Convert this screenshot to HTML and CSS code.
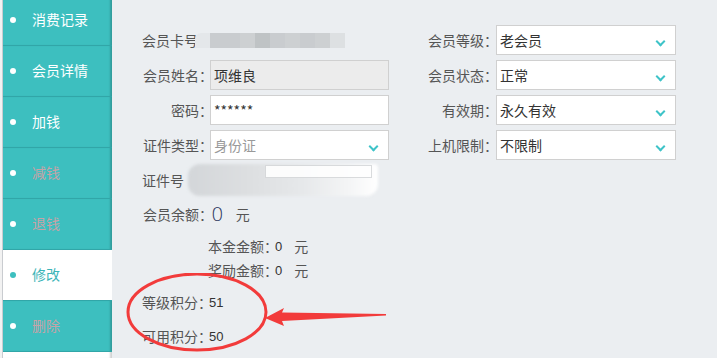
FILE: index.html
```html
<!DOCTYPE html>
<html lang="zh-CN">

<head>
    <meta charset="UTF-8">
    <meta name="viewport" content="width=device-width, initial-scale=1.0">
    <title>会员修改</title>
    <link rel="stylesheet" href="styles.css">
</head>

<body>
    <div class="edge"></div>

    <ul class="sidebar">
        <li class="nav-item">消费记录</li>
        <li class="nav-item">会员详情</li>
        <li class="nav-item">加钱</li>
        <li class="nav-item disabled">减钱</li>
        <li class="nav-item disabled">退钱</li>
        <li class="nav-item active">修改</li>
        <li class="nav-item disabled">删除</li>
    </ul>

    <div class="main">
        <div class="form">
            <div class="label plain">会员卡号</div>
            <div class="cell">
                <div class="mosaic">
                    <span class="m1"></span><span class="m2 wide"></span><span class="m3"></span><span class="m4"></span>
                    <span class="m2"></span><span class="m3"></span><span class="m2"></span><span class="m3"></span><span class="m5"></span>
                </div>
            </div>
            <div class="label right">会员等级：</div>
            <div class="select">老会员<span class="chevron"></span></div>

            <div class="label">会员姓名：</div>
            <div class="input readonly">项维良</div>
            <div class="label right">会员状态：</div>
            <div class="select">正常<span class="chevron"></span></div>

            <div class="label">密码：</div>
            <div class="input">******</div>
            <div class="label right">有效期：</div>
            <div class="select">永久有效<span class="chevron"></span></div>

            <div class="label">证件类型：</div>
            <div class="select placeholder">身份证<span class="chevron"></span></div>
            <div class="label right">上机限制：</div>
            <div class="select">不限制<span class="chevron"></span></div>

            <div class="label plain">证件号</div>
            <div class="cell wide">
                <div class="smear"></div>
                <div class="smear-bar"></div>
            </div>
        </div>

        <div class="balance">
            <div class="label">会员余额：</div>
            <span class="big-num">0</span>
            <span class="unit">元</span>
        </div>

        <div class="sub-row first">
            <span class="sub-label">本金金额：</span><span class="num">0</span><span class="unit">元</span>
        </div>
        <div class="sub-row">
            <span class="sub-label">奖励金额：</span><span class="num">0</span><span class="unit">元</span>
        </div>

        <div class="points first">
            <span class="sub-label">等级积分：</span><span class="num">51</span>
        </div>
        <div class="points">
            <span class="sub-label">可用积分：</span><span class="num">50</span>
        </div>

        <svg class="mark" width="280" height="100" viewBox="0 0 280 100">
            <ellipse cx="85" cy="39" rx="69" ry="38" fill="none" stroke="#f23b3b" stroke-width="3" />
            <polygon points="153,45 172,35 170,39.5 274,41 274,42.5 170,48 172,53" fill="#f23b3b" />
        </svg>
    </div>
</body>

</html>
```

FILE: styles.css
```css
* {
    box-sizing: border-box;
}

body {
    margin: 0;
    height: 358px;
    overflow: hidden;
    display: flex;
    font-family: "Noto Sans CJK SC", "Liberation Sans", sans-serif;
    font-size: 14px;
    font-feature-settings: "halt";
    background-color: #ebeef1;
}

.edge {
    width: 3px;
    background: #f2f2f2;
    border-right: 1px solid #c9ccd0;
}

/* left menu */
.sidebar {
    width: 109px;
    margin: -5px 0 0;
    padding: 0;
    list-style: none;
    background: #fff;
    box-shadow: inset -3px 0 2px -1px rgba(0, 0, 0, 0.18);
}

.nav-item {
    position: relative;
    height: 51px;
    padding: 0 0 2px 29px;
    display: flex;
    align-items: center;
    color: #fff;
    background: #3dbfbf;
    border-bottom: 1px solid #31a6a8;
    box-shadow: inset -3px 0 2px -1px rgba(0, 0, 0, 0.18);
}

.nav-item::before {
    content: "";
    position: absolute;
    left: 7px;
    top: 22px;
    width: 6px;
    height: 6px;
    border-radius: 50%;
    background: #fff;
}

.nav-item.disabled {
    color: #c7a3a7;
}

.nav-item.active {
    color: #3bb5b8;
    background: #fff;
    box-shadow: none;
}

.nav-item.active::before {
    background: #3dbfbf;
}

/* form */
.main {
    position: relative;
    flex: 1;
    padding: 25px 0 0 28px;
    color: #555;
}

.form {
    display: grid;
    grid-template-columns: 70px 179px 107px 180px;
    grid-auto-rows: 30px;
    row-gap: 5px;
}

.label {
    display: flex;
    align-items: center;
    justify-content: flex-end;
    padding-right: 4px;
    white-space: nowrap;
}

.label.plain {
    justify-content: flex-start;
    padding-left: 2px;
}

.label.right {
    padding-right: 5px;
}

.input,
.select {
    position: relative;
    display: flex;
    align-items: center;
    padding-left: 3px;
    color: #333;
    background: #fff;
    border: 1px solid #d0d0d0;
}

.input.readonly {
    background: #ececec;
}

.select.placeholder {
    color: #999;
}

.chevron {
    position: absolute;
    right: 11px;
    top: 12px;
    width: 7px;
    height: 7px;
    border-right: 2.5px solid #3ec3c8;
    border-bottom: 2.5px solid #3ec3c8;
    transform: rotate(45deg);
}

.cell {
    position: relative;
    display: flex;
    align-items: center;
}

.cell.wide {
    grid-column: 2 / 4;
}

.mosaic {
    display: flex;
    height: 15px;
    margin-left: -15px;
}

.mosaic span {
    width: 15px;
}

.mosaic span.wide {
    width: 30px;
}

.m1 { background: #e4e7ea; border-radius: 6px 0 0 0; }
.m2 { background: #c9cccf; }
.m3 { background: #cdd0d2; }
.m4 { background: #bfc3c5; }
.m5 { background: #dde0e2; }

.smear {
    width: 190px;
    height: 32px;
    margin-left: -22px;
    border-radius: 12px 4px 12px 12px;
    background: linear-gradient(90deg, #d3d6d9 0, #dcdee0 30%, #e6e8ea 60%, #f4f5f6 85%, #fff 100%);
    filter: blur(1.5px);
}

.smear-bar {
    position: absolute;
    left: 55px;
    top: 0;
    width: 107px;
    height: 13px;
    background: #fff;
    border: 1px solid #d6d8da;
    opacity: 0.9;
}

/* balance */
.balance {
    display: flex;
    align-items: center;
    height: 26px;
    margin-top: 6px;
}

.balance .label {
    width: 70px;
    height: 26px;
}

.big-num {
    margin-left: 1px;
    font-family: "DejaVu Sans", sans-serif;
    font-size: 20px;
    font-weight: 300;
    color: #2b3760;
}

.unit {
    margin-left: 12px;
}

.sub-row,
.points {
    display: flex;
    align-items: center;
    height: 24px;
}

.sub-row {
    padding-left: 68px;
}

.sub-row.first {
    margin-top: 7px;
}

.num {
    margin-left: 4px;
    font-family: "Liberation Sans", sans-serif;
    font-size: 13px;
    color: #333;
}

.points {
    padding-left: 2px;
    margin-top: 10px;
}

.points.first {
    margin-top: 8px;
}

.mark {
    position: absolute;
    left: 0;
    top: 273px;
}
```
